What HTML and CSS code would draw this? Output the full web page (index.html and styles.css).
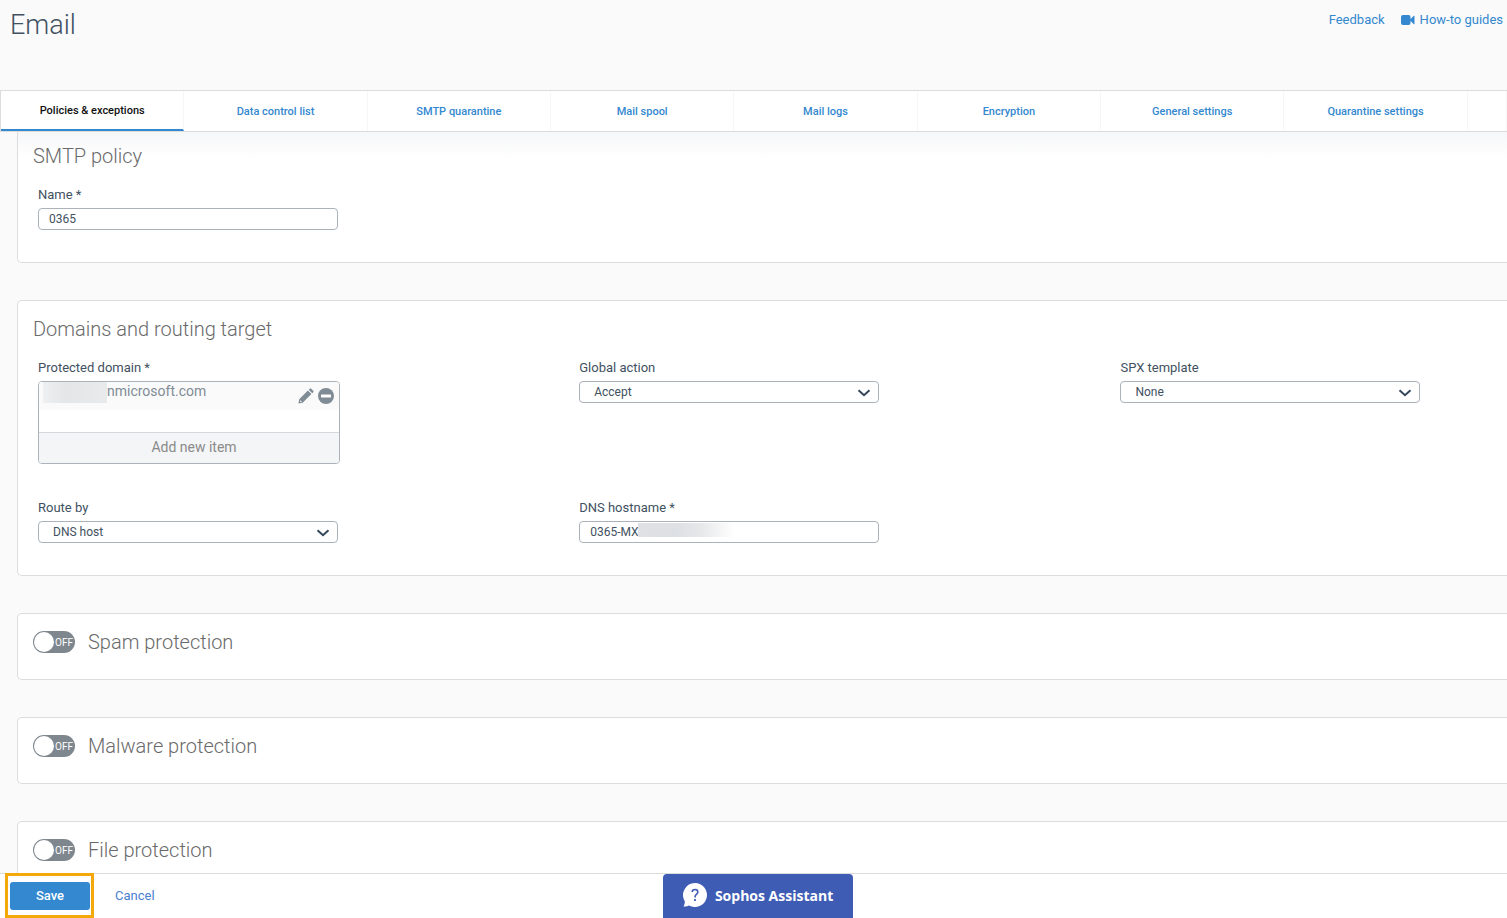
FILE: index.html
```html
<!DOCTYPE html>
<html lang="en">
  <head>
    <meta charset="UTF-8" />
    <meta name="viewport" content="width=device-width, initial-scale=1.0" />
    <title>Email</title>
    <link rel="stylesheet" href="styles.css">
  </head>
  <body>
    <header class="page-header">
      <h1>Email</h1>
      <nav class="help-links">
        <a href="#">Feedback</a>
        <a href="#">
          <svg width="14" height="10" viewBox="0 0 14 10" fill="currentColor" aria-hidden="true">
            <rect x="0" y="0" width="9.5" height="10" rx="2" />
            <path d="M8.5 5 L12.6 1 Q13.5 0.2 13.5 1.4 V8.6 Q13.5 9.8 12.6 9 Z" />
          </svg>
          How-to guides
        </a>
      </nav>
    </header>

    <nav class="tabs">
      <a class="tab active" href="#">Policies &amp; exceptions</a>
      <a class="tab" href="#">Data control list</a>
      <a class="tab" href="#">SMTP quarantine</a>
      <a class="tab" href="#">Mail spool</a>
      <a class="tab" href="#">Mail logs</a>
      <a class="tab" href="#">Encryption</a>
      <a class="tab" href="#">General settings</a>
      <a class="tab" href="#">Quarantine settings</a>
      <span class="tab"></span>
    </nav>

    <main class="content">
      <section class="card card-first">
        <h2>SMTP policy</h2>
        <div class="fields">
          <div class="field">
            <label for="name">Name *</label>
            <input class="control" type="text" id="name" value="0365" />
          </div>
        </div>
      </section>

      <section class="card">
        <h2>Domains and routing target</h2>
        <div class="fields">
          <div class="field">
            <span class="label">Protected domain *</span>
            <div class="item-list">
              <div class="item">
                <span class="masked"></span>
                <span class="item-name">nmicrosoft.com</span>
                <button class="icon-button" aria-label="Edit">
                  <svg width="16" height="16" viewBox="0 0 16 16" fill="currentColor">
                    <path d="M10.7 1.8 L11.8 0.7 Q12.5 0 13.2 0.7 L15.3 2.8 Q16 3.5 15.3 4.2 L14.2 5.3 Z" />
                    <path fill-rule="evenodd" d="M9.9 2.6 L13.4 6.1 L4.7 14.8 L0.4 15.6 L1.2 11.3 Z M2.3 12.3 L1.9 14.1 L3.7 13.7 L3.7 12.9 L3 12.9 Z" />
                  </svg>
                </button>
                <button class="icon-button" aria-label="Remove">
                  <svg width="16" height="16" viewBox="0 0 16 16">
                    <circle cx="8" cy="8" r="8" fill="currentColor" />
                    <rect x="3" y="6.5" width="10" height="3" rx="0.5" fill="#fff" />
                  </svg>
                </button>
              </div>
              <button class="add-item">Add new item</button>
            </div>
          </div>
          <div class="field">
            <label for="action">Global action</label>
            <div class="select">
              <select class="control" id="action"><option>Accept</option></select>
              <svg class="chevron" width="14" height="8" viewBox="0 0 14 8"><path d="M1.5 1.2 L7 6.2 L12.5 1.2" /></svg>
            </div>
          </div>
          <div class="field">
            <label for="spx">SPX template</label>
            <div class="select">
              <select class="control" id="spx"><option>None</option></select>
              <svg class="chevron" width="14" height="8" viewBox="0 0 14 8"><path d="M1.5 1.2 L7 6.2 L12.5 1.2" /></svg>
            </div>
          </div>
          <div class="field">
            <label for="route">Route by</label>
            <div class="select">
              <select class="control" id="route"><option>DNS host</option></select>
              <svg class="chevron" width="14" height="8" viewBox="0 0 14 8"><path d="M1.5 1.2 L7 6.2 L12.5 1.2" /></svg>
            </div>
          </div>
          <div class="field">
            <label for="dns">DNS hostname *</label>
            <div class="masked-input">
              <input class="control" type="text" id="dns" value="0365-MX" />
              <span class="mask"></span>
            </div>
          </div>
        </div>
      </section>

      <section class="card card-toggle">
        <label class="toggle"><input type="checkbox" id="spam" aria-labelledby="spam-title" /><span>OFF</span></label>
        <h2 id="spam-title">Spam protection</h2>
      </section>

      <section class="card card-toggle">
        <label class="toggle"><input type="checkbox" id="malware" aria-labelledby="malware-title" /><span>OFF</span></label>
        <h2 id="malware-title">Malware protection</h2>
      </section>

      <section class="card card-toggle">
        <label class="toggle"><input type="checkbox" id="file" aria-labelledby="file-title" /><span>OFF</span></label>
        <h2 id="file-title">File protection</h2>
      </section>
    </main>

    <footer class="actions">
      <div class="highlight">
        <button class="save">Save</button>
      </div>
      <a class="cancel" href="#">Cancel</a>
    </footer>

    <button class="assistant">
      <svg width="24" height="24" viewBox="0 0 24 24" aria-hidden="true">
        <path d="M12 0 A12 12 0 1 1 6 22.4 Q3.5 24 0.5 23.4 Q2 21.5 1.8 18.2 A12 12 0 0 1 12 0 Z" fill="#fff" />
        <path d="M9.2 9 Q9.2 6.5 12 6.5 Q14.8 6.5 14.8 9 Q14.8 10.4 13.4 11.4 Q12 12.4 12 14.4" fill="none" stroke="#3f5cb5" stroke-width="1.6" />
        <rect x="11.1" y="16" width="1.8" height="2" fill="#3f5cb5" />
      </svg>
      Sophos Assistant
    </button>
  </body>
</html>
```

FILE: styles.css
```css
* {
  box-sizing: border-box;
}

body {
  display: flex;
  flex-direction: column;
  height: 100vh;
  margin: 0;
  overflow: hidden;
  background-color: #fafafa;
  color: #415161;
  font-family: Roboto, "Liberation Sans", sans-serif;
  font-size: 13px;
}

a {
  color: #3488cf;
  text-decoration: none;
}

button,
input,
select {
  font-family: inherit;
}

button {
  padding: 0;
  border: 0;
  cursor: pointer;
}

/* header */
.page-header {
  display: flex;
  justify-content: space-between;
  align-items: flex-start;
  flex: none;
  height: 90px;
  padding: 8px 4px 0 10px;
}

h1 {
  margin: 0;
  font-size: 27px;
  font-weight: 300;
  line-height: 34px;
}

.help-links {
  display: flex;
  gap: 16px;
  line-height: 24px;
}

.help-links a {
  display: flex;
  align-items: center;
  gap: 5px;
}

/* tabs */
.tabs {
  display: grid;
  grid-template-columns: repeat(8, 14fr) 3fr;
  flex: none;
  height: 42px;
  border: 1px solid #dcdcdc;
  border-right: 0;
  background-color: #fff;
}

.tab {
  display: flex;
  align-items: center;
  justify-content: center;
  border-right: 1px solid #f7f7f7;
  font-size: 11px;
  font-weight: 500;
}

.tab.active {
  border-bottom: 2px solid #3488cf;
  color: #111;
}

/* cards */
.content {
  display: flex;
  flex-direction: column;
  gap: 37px;
  flex: 1;
  min-height: 0;
  padding-left: 17px;
  overflow: hidden;
}

.card {
  flex: none;
  padding: 14px 0 32px 15px;
  border: 1px solid #dcdcdc;
  border-right: 0;
  border-radius: 5px 0 0 5px;
  background-color: #fff;
}

.card-first {
  padding-top: 10px;
  border-top: 0;
  border-top-left-radius: 0;
  background-image: linear-gradient(#f6f7f9, #fff 26px);
}

.card-toggle {
  display: flex;
  align-items: center;
  gap: 13px;
  padding-bottom: 23px;
}

h2 {
  margin: 0;
  color: #6a6a6a;
  font-size: 20px;
  font-weight: 300;
  line-height: 28px;
}

.fields {
  display: grid;
  grid-template-columns: 7fr 7fr 5fr;
  row-gap: 36px;
  padding: 17px 0 0 5px;
}

.field label,
.label {
  display: block;
  margin-bottom: 5px;
  line-height: 16px;
}

.control {
  display: block;
  width: 300px;
  height: 22px;
  padding: 0 10px;
  border: 1px solid #abb2bb;
  border-radius: 4px;
  background-color: #fff;
  color: #415161;
  font-size: 12px;
}

.select,
.masked-input {
  position: relative;
  width: 300px;
}

select.control {
  padding-left: 14px;
  appearance: none;
}

.chevron {
  position: absolute;
  top: 8px;
  right: 8px;
  fill: none;
  stroke: #33475b;
  stroke-width: 2;
  pointer-events: none;
}

.mask {
  position: absolute;
  top: 2px;
  left: 59px;
  width: 96px;
  height: 14px;
  background: linear-gradient(to right, #dfe1e4, #dde0e4 40%, #e6e7e9 65%, #fff);
}

/* domain list */
.item-list {
  width: 302px;
  border: 1px solid #abb2bb;
  border-radius: 4px;
  overflow: hidden;
}

.item {
  display: flex;
  align-items: flex-start;
  height: 28px;
  margin-bottom: 22px;
  padding: 0 5px 0 4px;
  background-color: #fafafa;
  color: #7f8c96;
}

.item-name {
  flex: 1;
  font-size: 14px;
  line-height: 18px;
}

.masked {
  width: 64px;
  height: 21px;
  background: linear-gradient(to right, #eeeff0, #e5e6e8 35%, #e9eaec);
}

.icon-button {
  height: 16px;
  margin: 6px 0 0 4px;
  background: none;
  color: #7f8c96;
}

.icon-button svg {
  display: block;
}

.add-item {
  width: 100%;
  height: 31px;
  padding: 0 0 2px 10px;
  border-top: 1px solid #d5d8dc;
  background-color: #f4f5f7;
  color: #8a8a8a;
  font-size: 14px;
}

/* on/off switch */
.toggle {
  display: flex;
  align-items: center;
  width: 42px;
  height: 22px;
  padding: 1px;
  border-radius: 11px;
  background-color: #7e878e;
  color: #fff;
  font-size: 10px;
  cursor: pointer;
}

.toggle input {
  appearance: none;
  flex: none;
  width: 20px;
  height: 20px;
  margin: 0 1px 0 0;
  border-radius: 50%;
  background-color: #fff;
}

/* footer */
.actions {
  display: flex;
  align-items: center;
  gap: 21px;
  flex: none;
  height: 45px;
  padding-left: 5px;
  background-color: #fff;
  box-shadow: inset 0 1px #dcdcdc;
}

.highlight {
  height: 45px;
  padding: 6px 1px 0 2px;
  border: 3px solid #f5a80c;
}

.save {
  width: 80px;
  height: 28px;
  padding-bottom: 2px;
  border-radius: 3px;
  background-color: #3488cf;
  color: #fff;
  font-size: 13px;
  font-weight: 500;
}

.cancel {
  color: #4a80d0;
}

.assistant {
  position: fixed;
  bottom: 0;
  left: 44%;
  display: flex;
  align-items: center;
  justify-content: center;
  gap: 8px;
  width: 190px;
  height: 44px;
  padding-bottom: 2px;
  border-radius: 4px 4px 0 0;
  background-color: #3f5cb5;
  color: #fff;
  font-family: "Open Sans", "Noto Sans", sans-serif;
  font-size: 14px;
  font-weight: 700;
}
```
